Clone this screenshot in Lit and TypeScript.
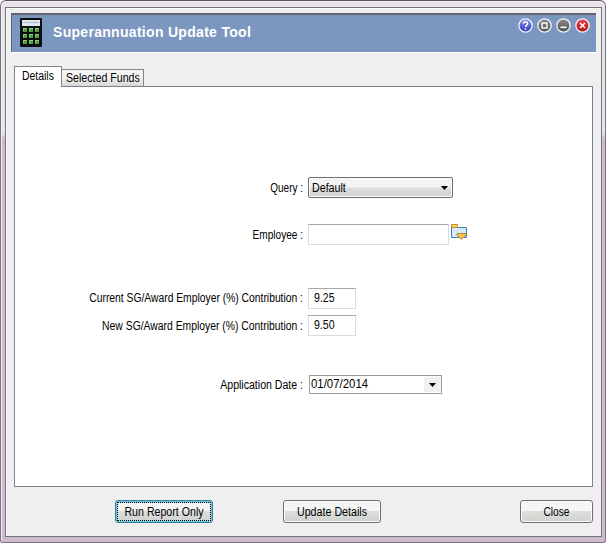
import { LitElement, html, css, svg } from "lit";
import { customElement, property } from "lit/decorators.js";
import { styleMap } from "lit/directives/style-map.js";

@customElement("ui-text")
class UiText extends LitElement {
  @property({ type: Number }) scale = 0.88;
  @property() align = "left";
  static styles = css`
    :host { display: block; line-height: 14px; white-space: nowrap; }
    .t { display: block; }
  `;
  render() {
    return html`<span class="t" style=${styleMap({
      transform: `scaleX(${this.scale})`,
      transformOrigin: `${this.align} center`,
      textAlign: this.align,
    })}><slot></slot></span>`;
  }
}

const cells = [0, 1, 2].flatMap((r) => [0, 1, 2].map((c) => [3 + c * 6, 11 + r * 6]));

@customElement("app-root")
class AppRoot extends LitElement {
  static styles = css`
    :host { display: block; width: 606px; height: 543px; font: 12px "Liberation Sans", Arial, sans-serif; color: #000; }
    * { box-sizing: border-box; }
    svg { display: block; }
    .frame { height: 543px; padding: 6px 3px 4px 4px; border: 1px solid #77737a; border-top-color: #555; border-radius: 6px 6px 3px 3px;
      background: linear-gradient(#e8e2ea 0, #e8e2ea 132px, #cdbccd 138px, #cdbccd 100%); box-shadow: inset 1px 1px #f5f0f6; }
    .window { height: 530px; border: 1px solid #77737c; padding: 5px 5px 0; background: #f0eff0; display: flex; flex-direction: column; box-shadow: inset 1px 1px #fafafa; }
    .title { height: 39px; flex: none; border: 2px solid #62656f; border-left-width: 1px; border-right: 0; border-bottom: 0; display: flex; padding: 3px 6px 0 8px;
      background: #7b97c0; color: #fff; box-shadow: 0 1px #fff; }
    .title h1 { margin: 6px 0 0 11px; font-size: 14px; line-height: 16px; font-weight: bold; letter-spacing: .3px; white-space: nowrap; flex: 1; }
    .ctl { display: flex; gap: 4px; }
    .tabs { display: flex; height: 21px; margin: 14px 0 0 3px; align-items: flex-end; position: relative; flex: none; z-index: 1; }
    .tab { border: 1px solid #858585; border-bottom: 0; }
    .tab.on { width: 48px; height: 21px; background: #fff; padding: 2px 0 0 7px; }
    .tab.off { width: 82px; height: 17px; margin: 0 0 1px; border-left: 0; padding: 1px 0 0 4px; background: linear-gradient(#f4f4f4 45%, #d6d8d6); }
    .panel { width: 579px; height: 401px; margin: -1px 0 0 3px; flex: none; border: 1px solid #80808a; background: #fff;
      display: grid; grid-template-columns: 288px auto; column-gap: 5px; align-content: start; padding-top: 90px;
      grid-template-rows: 47px 64px 27px 60px 20px; }
    .label { padding-top: 4px; }
    .label.high { padding-top: 3px; }
    .field { display: flex; align-items: flex-start; }
    .combo { width: 145px; height: 21px; border: 1px solid #706d72; border-radius: 2px; padding: 3px 4px 0 3px; display: flex; justify-content: space-between;
      background: linear-gradient(#f3f3f3 45%, #dcdedc 55%, #d0d2d0); box-shadow: inset 0 0 0 1px #fafafa; }
    .combo svg { margin-top: 5px; }
    .input { height: 21px; border: 1px solid #d7dce4; border-top-color: #a1aba1; background: #fff; padding: 2px 0 0 5px; }
    .name { width: 141px; margin-right: 1px; }
    .num { width: 48px; }
    .datebox { width: 133px; height: 19px; margin-left: 1px; border: 1px solid #999f99; display: flex; justify-content: space-between; padding: 1px 0 0 1px; }
    .drop { width: 17px; height: 15px; padding: 6px 0 0 5px; background: #f0f0f0; }
    .footer { display: flex; margin: 13px 0 0 104px; }
    .btn { height: 23px; border: 1px solid #706d74; border-radius: 3px; text-align: center; padding-top: 4px;
      background: linear-gradient(#f5f5f5 45%, #dddfdd 50%, #d0d2d0); box-shadow: inset 0 0 0 1px #fbfbfb; }
    .btn.focus { border-color: #3f7d9a; box-shadow: inset 0 0 0 1px #6fc3dc, inset 0 0 0 2px #a5e2f2; padding: 1px; }
    .dots { height: 19px; border: 1px dotted #000; padding-top: 2px; }
    .run { width: 98px; } .upd { width: 98px; margin-left: 70px; } .cls { width: 73px; margin-left: 139px; }
  `;

  private round(top: string, bottom: string, id: string, mark: unknown) {
    return html`<svg width="15" height="15" viewBox="0 0 15 15">
      <defs><linearGradient id=${id} x1="0" y1="0" x2="0" y2="1"><stop stop-color=${top}/><stop offset="1" stop-color=${bottom}/></linearGradient></defs>
      <circle cx="7.5" cy="7.5" r="6.6" fill="url(#${id})" stroke="#f1f3f8" stroke-width="1.3"/>${mark}</svg>`;
  }
  private arrow(w = 7) {
    return html`<svg width=${w} height="4" viewBox="0 0 7 4"><path d="M0 0H7L3.5 4Z"/></svg>`;
  }
  render() {
    return html`<div class="frame"><div class="window">
      <header class="title">
        <svg width="22" height="29" viewBox="0 0 22 29">
          <rect width="22" height="29" rx="1" fill="#0c0f0d"/>
          <rect x="2" y="2" width="18" height="6" fill="#dfe7f1"/><path d="M3 4.5H19" stroke="#aebccd"/>
          ${cells.map(([x, y]) => svg`<rect x=${x} y=${y - 1} width="4" height="4" fill="#4c9b42"/><path d="M${x + 0.5} ${y + 2}V${y - 0.5}H${x + 4}" fill="none" stroke="#8fd080"/>`)}
        </svg>
        <h1>Superannuation Update Tool</h1>
        <div class="ctl">
          ${this.round("#8890ee", "#3038bc", "g1", svg`<path d="M5.4 5.7C5.4 2.9 9.7 3 9.6 5.7C9.5 7.2 7.5 7.1 7.5 9M7.5 10.3V11.8" fill="none" stroke="#fff" stroke-width="1.5"/>`)}
          ${this.round("#8d8d8d", "#4d4d4d", "g2", svg`<rect x="5" y="5" width="5" height="5" fill="none" stroke="#fff" stroke-width="1.4"/>`)}
          ${this.round("#8d8d8d", "#4d4d4d", "g3", svg`<path d="M4.5 9.3H10.5" stroke="#fff" stroke-width="1.6"/>`)}
          ${this.round("#ee4545", "#b00c16", "g4", svg`<path d="M5 5L10 10M10 5L5 10" stroke="#fff" stroke-width="1.6"/>`)}
        </div>
      </header>
      <nav class="tabs">
        <div class="tab on"><ui-text .scale=${0.87}>Details</ui-text></div>
        <div class="tab off"><ui-text .scale=${0.885}>Selected Funds</ui-text></div>
      </nav>
      <main class="panel">
        <ui-text class="label" align="right" .scale=${0.83}>Query :</ui-text>
        <div class="field"><div class="combo"><ui-text .scale=${0.89}>Default</ui-text>${this.arrow()}</div></div>
        <ui-text class="label" align="right" .scale=${0.84}>Employee :</ui-text>
        <div class="field"><div class="input name"></div>
          <svg width="18" height="17" viewBox="0 0 18 17"><path d="M1.5 13.5V3.5H16.5V13.5Z" fill="#d6eafa" stroke="#3f7fb4"/><path d="M1.5 0.5H7.5V3.5H1.5Z" fill="#ffd265" stroke="#bd8d38"/><path d="M7 9.5H16V11L11.5 15.5L7 11Z" fill="#f5c04b" stroke="#b78632"/></svg></div>
        <ui-text class="label high" align="right" .scale=${0.86}>Current SG/Award Employer (%) Contribution :</ui-text>
        <div class="field"><div class="input num"><ui-text .scale=${0.88}>9.25</ui-text></div></div>
        <ui-text class="label" align="right" .scale=${0.864}>New SG/Award Employer (%) Contribution :</ui-text>
        <div class="field"><div class="input num"><ui-text .scale=${0.88}>9.50</ui-text></div></div>
        <ui-text class="label high" align="right" .scale=${0.88}>Application Date :</ui-text>
        <div class="field"><div class="datebox"><ui-text .scale=${0.95}>01/07/2014</ui-text><div class="drop">${this.arrow()}</div></div></div>
      </main>
      <footer class="footer">
        <div class="btn focus run"><div class="dots"><ui-text align="center" .scale=${0.885}>Run Report Only</ui-text></div></div>
        <div class="btn upd"><ui-text align="center" .scale=${0.89}>Update Details</ui-text></div>
        <div class="btn cls"><ui-text align="center" .scale=${0.85}>Close</ui-text></div>
      </footer>
    </div></div>`;
  }
}
